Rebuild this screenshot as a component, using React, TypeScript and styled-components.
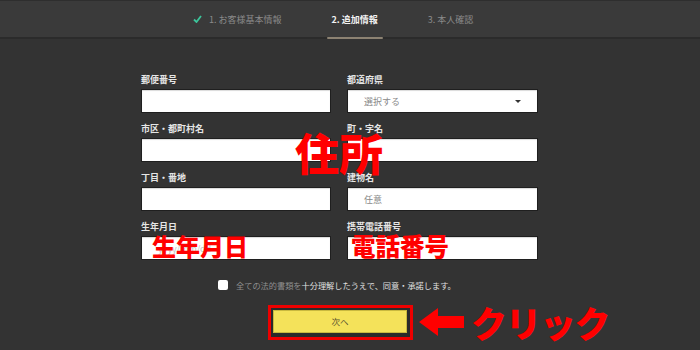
import styled, { createGlobalStyle } from "styled-components";

const GlobalStyle = createGlobalStyle`
  html, body {
    margin: 0;
    padding: 0;
    background: #333333;
    font-family: "Noto Sans CJK JP", "Noto Sans", sans-serif;
  }
`;

const Page = styled.div`
  width: 700px;
  height: 350px;
  overflow: hidden;
  background: #333333;
  display: flex;
  flex-direction: column;
`;

const Header = styled.div`
  height: 36px;
  border-top: 1px solid #2e2e2e;
  border-bottom: 2px solid #2b2b2b;
  background: #3a3a3a;
  display: flex;
  align-items: stretch;
  padding-left: 188px;
  gap: 40px;
`;

const Step = styled.div<{ $active?: boolean }>`
  position: relative;
  display: flex;
  align-items: center;
  gap: 7px;
  padding: 0 5px;
  font-size: 9px;
  color: ${({ $active }) => ($active ? "#f2f2f2" : "#8a8a8a")};
  font-weight: ${({ $active }) => ($active ? 700 : 400)};

  &::after {
    content: "";
    display: ${({ $active }) => ($active ? "block" : "none")};
    position: absolute;
    left: 0;
    right: 0;
    bottom: -2px;
    height: 2px;
    background: #8c8272;
    border-radius: 1px;
  }
`;

const Form = styled.div`
  position: relative;
  margin: 35px 0 0 141px;
  width: 397px;
  display: grid;
  grid-template-columns: 190px 191px;
  column-gap: 16px;
  row-gap: 10px;
`;

const Field = styled.div`
  display: flex;
  flex-direction: column;
  gap: 3px;
`;

const Label = styled.div`
  height: 12px;
  line-height: 12px;
  font-size: 9px;
  font-weight: 700;
  color: #e6e6e6;
`;

const Input = styled.div`
  position: relative;
  height: 24px;
  box-sizing: border-box;
  background: #ffffff;
  border: 1px solid #1f1f1f;
  box-shadow: inset 0 1px 1px rgba(0, 0, 0, 0.15);
  display: flex;
  align-items: center;
  justify-content: space-between;
  padding: 0 16px;
  font-size: 9px;
  color: #8a8a8a;
`;

const Faint = styled.span`
  color: #c4c4c4;
  font-size: 9px;
`;

const Caret = styled.span`
  width: 0;
  height: 0;
  border-left: 3px solid transparent;
  border-right: 3px solid transparent;
  border-top: 3px solid #333;
`;

const Overlay = styled.div<{ $size: number; $left: number; $top: number }>`
  position: absolute;
  left: ${({ $left }) => $left}px;
  top: ${({ $top }) => $top}px;
  font-size: ${({ $size }) => $size}px;
  line-height: 1;
  font-weight: 900;
  color: #ff0000;
  white-space: nowrap;
  pointer-events: none;
`;

const AgreeRow = styled.div`
  margin: 19px 0 0 218px;
  display: flex;
  align-items: center;
  gap: 8px;
  font-size: 8.2px;
  color: #e0e0e0;
`;

const Box = styled.span`
  width: 10px;
  height: 10px;
  border-radius: 2px;
  background: #ffffff;
`;

const Dim = styled.span`
  color: #8f8f8f;
`;

const ActionRow = styled.div`
  margin: 13px 0 0 268px;
  display: flex;
  align-items: center;
  gap: 6px;
`;

const Highlight = styled.div`
  border: 3px solid #ee0000;
  padding: 2px 3px 4px 2px;
  background: #2a2a2a;
`;

const NextButton = styled.div`
  width: 134px;
  height: 23px;
  background: #f4e25a;
  border: 1px solid #c9b93f;
  box-sizing: border-box;
  display: flex;
  align-items: center;
  justify-content: center;
  font-size: 8.5px;
  color: #5a5330;
`;

const ClickText = styled.div`
  font-size: 36px;
  line-height: 1;
  font-weight: 900;
  color: #ff0000;
  letter-spacing: -1.5px;
  margin-left: 1px;
`;

const Check = () => (
  <svg width="9" height="8" viewBox="0 0 9 8">
    <path d="M1 4.5 L3.5 7 L8 1" fill="none" stroke="#3cc49a" strokeWidth="1.8" />
  </svg>
);

const Arrow = () => (
  <svg width="45" height="28" viewBox="0 0 45 28">
    <polygon points="0,14 19,0 19,8 45,8 45,20 19,20 19,28" fill="#ff0000" />
  </svg>
);

export default function App() {
  return (
    <Page>
      <GlobalStyle />
      <Header>
        <Step>
          <Check />
          1. お客様基本情報
        </Step>
        <Step $active>2. 追加情報</Step>
        <Step>3. 本人確認</Step>
      </Header>

      <Form>
        <Field>
          <Label>郵便番号</Label>
          <Input />
        </Field>
        <Field>
          <Label>都道府県</Label>
          <Input>
            選択する
            <Caret />
          </Input>
        </Field>
        <Field>
          <Label>市区・都町村名</Label>
          <Input />
        </Field>
        <Field>
          <Label>町・字名</Label>
          <Input />
        </Field>
        <Field>
          <Label>丁目・番地</Label>
          <Input />
        </Field>
        <Field>
          <Label>建物名</Label>
          <Input>任意</Input>
        </Field>
        <Field>
          <Label>生年月日</Label>
          <Input>
            <Faint>yyyy/mm/dd</Faint>
          </Input>
        </Field>
        <Field>
          <Label>携帯電話番号</Label>
          <Input />
        </Field>

        <Overlay $size={44} $left={154} $top={56}>
          住所
        </Overlay>
        <Overlay $size={24} $left={11} $top={160}>
          生年月日
        </Overlay>
        <Overlay $size={24.5} $left={210} $top={160}>
          電話番号
        </Overlay>
      </Form>

      <AgreeRow>
        <Box />
        <span>
          <Dim>全ての法的書類を</Dim>十分理解したうえで、同意・承諾します。
        </span>
      </AgreeRow>

      <ActionRow>
        <Highlight>
          <NextButton>次へ</NextButton>
        </Highlight>
        <Arrow />
        <ClickText>クリック</ClickText>
      </ActionRow>
    </Page>
  );
}
